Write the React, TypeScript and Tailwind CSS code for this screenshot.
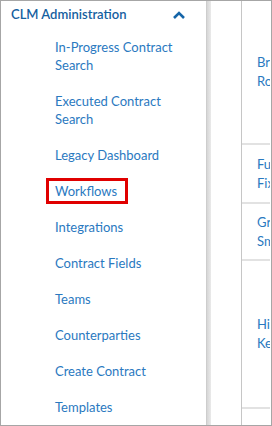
const items = [
  'In-Progress Contract Search',
  'Executed Contract Search',
  'Legacy Dashboard',
  'Workflows',
  'Integrations',
  'Contract Fields',
  'Teams',
  'Counterparties',
  'Create Contract',
  'Templates',
];

// row heights include the 2px bottom rule
const rows = [
  { h: 'h-[144px]', a: 'Brooks', b: 'Road Agreement' },
  { h: 'h-[59px]', a: 'Full', b: 'Fixed Fee' },
  { h: 'h-[57px]', a: 'Green', b: 'Smith LLC' },
  { h: 'h-[148px]', a: 'Hill', b: 'Kent Partners' },
];

function Chevron() {
  return (
    <svg width="14" height="10" viewBox="0 0 14 10" className="mr-[20px]">
      <polyline points="2,8 7,3 12,8" fill="none" stroke="#1565a8" strokeWidth="2.6" />
    </svg>
  );
}

export default function App() {
  return (
    <div className="flex h-[426px] w-[272px] overflow-hidden border border-[#a6a6a6] bg-white font-['Lato','Liberation_Sans',sans-serif] text-[13px]">
      <aside className="flex w-[205px] shrink-0 flex-col">
        <div className="flex h-[29px] items-center justify-between pl-[10px]">
          <span className="font-semibold text-[#15609f]">CLM Administration</span>
          <Chevron />
        </div>
        <ul className="pt-[1px] pl-[54px] pr-[16px]">
          {items.map((label) => (
            <li key={label} className="py-[9px] leading-[18px] text-[#2a79bf]">
              {label === 'Workflows' ? (
                <span className="-my-[4px] -ml-[9px] inline-block border-[3px] border-[#e00000] py-[1px] pl-[6px] pr-[8px]">
                  {label}
                </span>
              ) : (
                label
              )}
            </li>
          ))}
        </ul>
      </aside>

      <div className="w-[5px] shrink-0 border-l border-[#cdcdcd] bg-gradient-to-r from-[#d6d6d6] to-[#eaeaea]" />
      <div className="w-[30px] shrink-0" />

      <div className="flex w-[29px] shrink-0 flex-col overflow-hidden border-l border-[#c6c6c6]">
        {rows.map((r) => (
          <div
            key={r.a}
            className={`${r.h} flex shrink-0 flex-col justify-center border-b-2 border-[#e2e2e2] pl-[15px] leading-[19px] whitespace-nowrap text-[#2a79bf]`}
          >
            <div>{r.a}</div>
            <div>{r.b}</div>
          </div>
        ))}
        <div className="flex-1" />
      </div>
    </div>
  );
}
